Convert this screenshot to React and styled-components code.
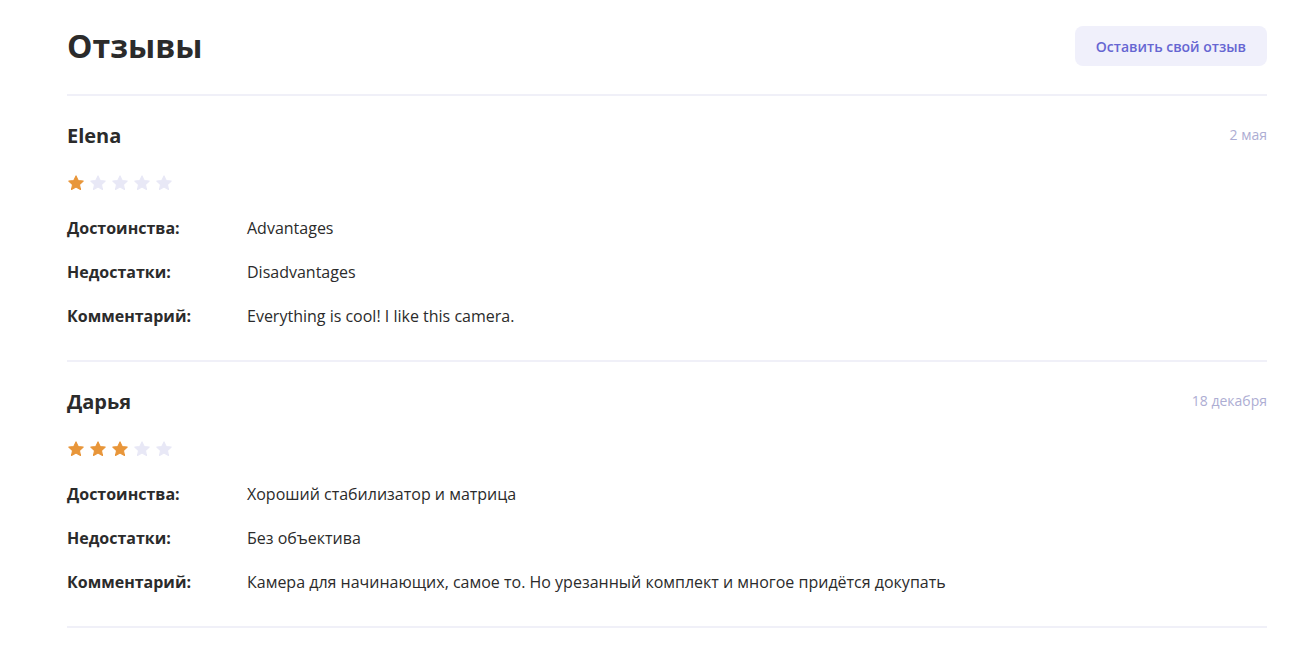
import React from 'react'
import styled, { createGlobalStyle } from 'styled-components'

const GlobalStyle = createGlobalStyle`
  body {
    margin: 0;
    background: #fff;
    font-family: 'Open Sans', 'Noto Sans', sans-serif;
    color: #2b2b2b;
  }
`

const Page = styled.section`
  padding: 26px 43px 0 67px;
`

const Header = styled.header`
  display: flex;
  align-items: center;
  justify-content: space-between;
  padding-bottom: 28px;
  border-bottom: 2px solid #f0f0f8;
`

const Title = styled.h2`
  margin: 0;
  font-size: 32px;
  line-height: 40px;
  font-weight: 700;
  color: #2b2b2b;
`

const AddButton = styled.button`
  height: 40px;
  padding: 0 21px;
  border: none;
  border-radius: 8px;
  background: #f0f0fb;
  color: #6666d2;
  font-family: 'Open Sans', sans-serif;
  font-size: 14px;
  font-weight: 600;
  cursor: pointer;
`

const Review = styled.article`
  padding: 26px 0 32px;
  border-bottom: 2px solid #f0f0f8;
`

const Top = styled.div`
  display: flex;
  justify-content: space-between;
  align-items: flex-start;
`

const Name = styled.h3`
  margin: 0;
  font-size: 20px;
  line-height: 28px;
  font-weight: 700;
`

const Date = styled.span`
  font-size: 14px;
  line-height: 26px;
  color: #adadd3;
`

const Stars = styled.div`
  display: flex;
  gap: 4px;
  margin-top: 24px;
`

const Star = styled.svg`
  width: 18px;
  height: 18px;
  fill: ${(p) => (p.$active ? '#e8963a' : '#e8e8f6')};
  stroke: ${(p) => (p.$active ? '#e8963a' : '#e8e8f6')};
  stroke-width: 1.5;
  stroke-linejoin: round;
`

const Rows = styled.dl`
  display: grid;
  grid-template-columns: 180px 1fr;
  row-gap: 20px;
  margin: 24px 0 0;
  font-size: 16px;
  line-height: 24px;
`

const Label = styled.dt`
  font-weight: 700;
`

const Value = styled.dd`
  margin: 0;
`

const reviews = [
  {
    name: 'Elena',
    date: '2 мая',
    rating: 1,
    pros: 'Advantages',
    cons: 'Disadvantages',
    comment: 'Everything is cool! I like this camera.',
  },
  {
    name: 'Дарья',
    date: '18 декабря',
    rating: 3,
    pros: 'Хороший стабилизатор и матрица',
    cons: 'Без объектива',
    comment:
      'Камера для начинающих, самое то. Но урезанный комплект и многое придётся докупать',
  },
]

function StarIcon({ active }) {
  return (
    <Star $active={active} viewBox="0 0 24 24">
      <path d="M12 2.5l2.9 6.2 6.7.7-5 4.6 1.4 6.7L12 17.3l-6 3.4 1.4-6.7-5-4.6 6.7-.7z" />
    </Star>
  )
}

export default function App() {
  return (
    <Page>
      <GlobalStyle />
      <Header>
        <Title>Отзывы</Title>
        <AddButton>Оставить свой отзыв</AddButton>
      </Header>
      {reviews.map((r) => (
        <Review key={r.name}>
          <Top>
            <Name>{r.name}</Name>
            <Date>{r.date}</Date>
          </Top>
          <Stars>
            {[1, 2, 3, 4, 5].map((n) => (
              <StarIcon key={n} active={n <= r.rating} />
            ))}
          </Stars>
          <Rows>
            <Label>Достоинства:</Label>
            <Value>{r.pros}</Value>
            <Label>Недостатки:</Label>
            <Value>{r.cons}</Value>
            <Label>Комментарий:</Label>
            <Value>{r.comment}</Value>
          </Rows>
        </Review>
      ))}
    </Page>
  )
}
